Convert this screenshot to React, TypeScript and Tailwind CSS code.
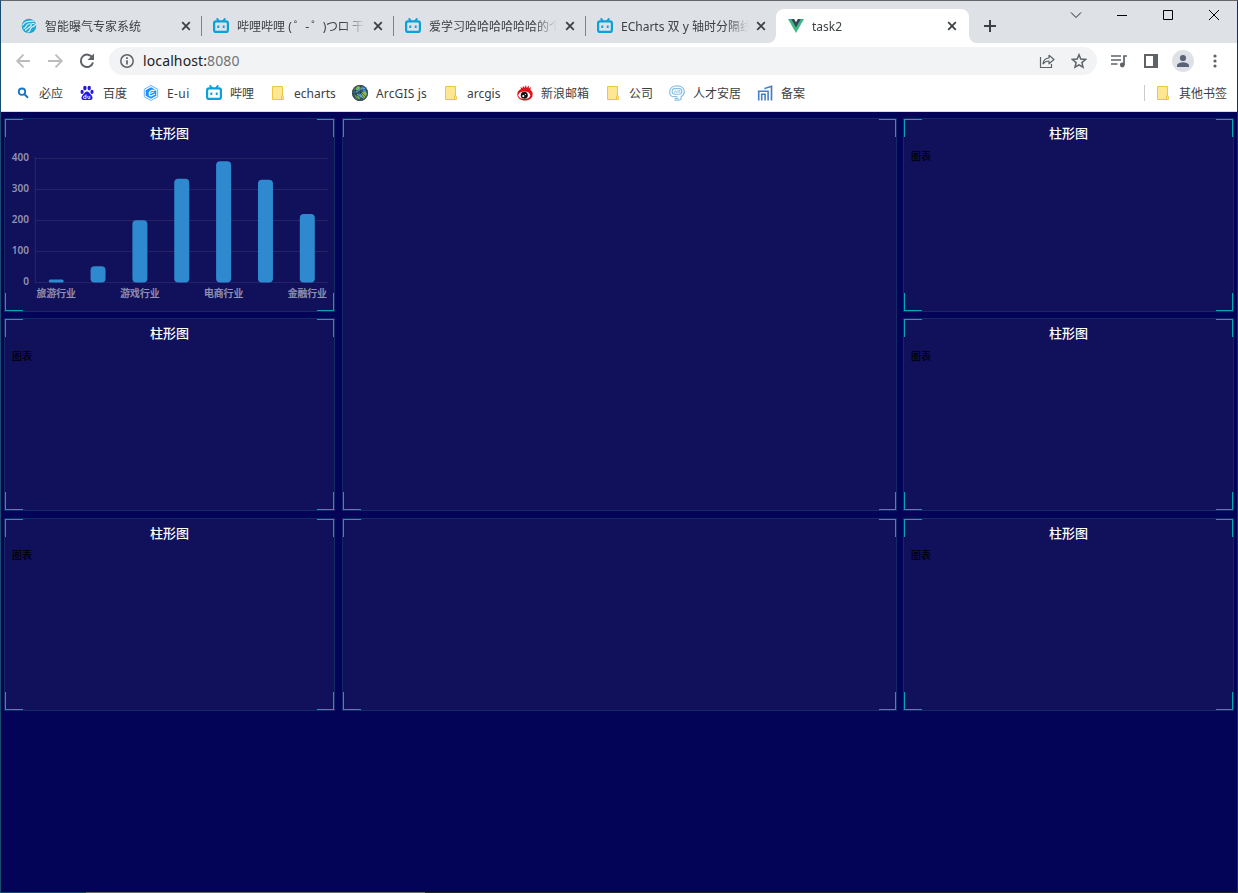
import type { ReactNode } from 'react';

const TvIcon = () => (
  <svg width="16" height="16" viewBox="0 0 16 16" fill="none" stroke="#0ba1d8" strokeWidth="2.200" className="block shrink-0">
    <rect x="1.100" y="3.400" width="13.800" height="10.500" rx="2" />
    <path d="M4.200 .900l1.500 2M11.800 .900l-1.500 2" strokeLinecap="round" strokeWidth="1.800" />
    <path d="M5.300 7.400v2.600M10.700 7.400v2.600" strokeWidth="1.900" />
  </svg>
);

const SwirlIcon = () => (
  <svg width="16" height="16" viewBox="0 0 16 16" className="block shrink-0">
    <circle cx="8" cy="8" r="7.300" fill="#22a7d0" />
    <path d="M1.500 7.500C3.500 3.500 7 3 13.500 3.200M2.500 10.500C6.500 10 4 5.800 8.200 5.800c3.300 0 2 2.200.3 3.200S6.500 11 4 12.500M6.500 14.300c3.500-.5 2-4.300 4.500-5.300 2-.7 3.500-2 3.700-3.200M10.500 5.500h3" fill="none" stroke="#e2f5fb" strokeWidth="1.100" />
  </svg>
);

const VueIcon = () => (
  <svg width="16" height="16" viewBox="0 0 16 16" className="block shrink-0">
    <path d="M0 1h16L8 15z" fill="#41b883" />
    <path d="M3.200 1h9.600L8 9.600z" fill="#35495e" />
    <path d="M6.200 1h3.600L8 4.200z" fill="#fff" />
  </svg>
);

const FolderIcon = () => (
  <svg width="16" height="16" viewBox="0 0 16 16" className="block shrink-0">
    <path d="M2.500 1.500h10v9.500l.900.600v2.900H2.500z" fill="#ffe693" stroke="#edc644" />
    <path d="M11.500 14.500v-3.700h1" fill="none" stroke="#edc644" />
  </svg>
);

const BingIcon = () => (
  <svg width="16" height="16" viewBox="0 0 16 16" fill="none" stroke="#1876c8" className="block shrink-0">
    <circle cx="7" cy="6.700" r="3.200" strokeWidth="1.800" />
    <path d="M9.500 9.300l3.500 3.500" strokeWidth="2" />
  </svg>
);

const PawIcon = () => (
  <svg width="16" height="16" viewBox="0 0 16 16" fill="#2319dc" className="block shrink-0">
    <ellipse cx="5.900" cy="3.100" rx="1.700" ry="2.400" />
    <ellipse cx="10.200" cy="3.100" rx="1.700" ry="2.400" />
    <ellipse cx="3.100" cy="6.900" rx="1.600" ry="2.100" />
    <ellipse cx="13" cy="6.900" rx="1.600" ry="2.100" />
    <path d="M8 6.600c2 0 2.600 1.900 4.200 3.300 2.200 2 1.600 5-1 5.100H4.800c-2.600-.1-3.200-3.100-1-5.100C5.400 8.500 6 6.600 8 6.600z" />
    <path d="M7 9.500v4H5.600a1.200 1.200 0 010-2.400H7M8.900 10.900v1.900q0 .8.900.8h1v-2.700" fill="none" stroke="#fff" strokeWidth=".9" />
  </svg>
);

const HexIcon = () => (
  <svg width="16" height="16" viewBox="0 0 16 16" className="block shrink-0">
    <path d="M8 .5l6.700 3.700v7.600L8 15.500l-6.700-3.700V4.200z" fill="#fff" stroke="#63b4ff" />
    <path d="M8 2.200l5.300 3v5.600l-5.300 3-5.300-3V5.200z" fill="#1e90ff" />
    <path d="M12.500 5.200L8.500 5.400 6.300 7.200v3l1.700.900 4-2M6.300 8.700l4.500-1.700" fill="none" stroke="#fff" strokeWidth="1.100" />
  </svg>
);

const GlobeIcon = () => (
  <svg width="18" height="18" viewBox="0 0 18 18" className="block shrink-0">
    <circle cx="9" cy="9" r="8" fill="#30607c" />
    <path d="M3 5l4-3 4 2-1 3-4 1zM10 9l4-2 2 3-3 5-3-2zM3 10l4 0 2 5-3 0z" fill="#8cbd45" />
    <path d="M4 8l4-4 3 1-5 4zM11 3l3 1 1 4-3-1zM6 11l4-1 0 4z" fill="#5ba7dc" />
    <path d="M2 6c5 0 10 3 13 7M1.500 10c4 0 8 3 10 6M5 2c-1 5 0 10 3 15M10 1c-2 5 0 11 4 14M3 13c3-5 7-8 13-7" fill="none" stroke="#1c2d36" strokeWidth=".6" />
    <circle cx="9" cy="9" r="7.600" fill="none" stroke="#42505a" />
  </svg>
);

const WeiboIcon = () => (
  <svg width="16" height="16" viewBox="0 0 16 16" className="block shrink-0">
    <path d="M.3 10C0 7 1.500 5 4 4L3.500 2l2 1.200L6 .8l1.500 2L9 0l.7 2.900L12 .6l-.2 3L14 2l-.7 3C15.500 6 16 8 15.500 10.500 15 14 11.500 15.500 8 15.500S.8 14 .3 10z" fill="#e0131b" />
    <ellipse cx="7.300" cy="10.300" rx="5.900" ry="3.800" fill="#fff" />
    <circle cx="7.300" cy="10.300" r="3.500" fill="#171111" />
    <circle cx="6.300" cy="11.100" r="1.100" fill="#fff" />
    <circle cx="8.500" cy="9.500" r=".6" fill="#fff" />
  </svg>
);

const HeadIcon = () => (
  <svg width="16" height="16" viewBox="0 0 16 16" fill="none" stroke="#87bfe8" className="block shrink-0">
    <path d="M4 12C1.500 11 .7 9 .7 6.800.7 3 3.500.8 8 .8s7.300 2.200 7.300 6c0 2.300-1.300 4-3.300 5.200v2.300L9.500 15.200H5.500M4 11.500h4.500M5.500 13.300h4" strokeWidth="1.200" />
    <rect x="3.200" y="3.600" width="9.600" height="5.600" rx="2.500" strokeWidth="1.100" />
    <path d="M5.300 7.700l1.200-2 1.200 2M9 5.200v2.500M10.800 5.200v2.500" />
  </svg>
);

const BuildingIcon = () => (
  <svg width="16" height="16" viewBox="0 0 16 16" fill="none" stroke="#4b7dbd" className="block shrink-0">
    <path d="M8.300 4.200V3.300L14.500 1.300V15.500" strokeWidth="1.700" />
    <path d="M.8 6.300h10.300v9.200M1.700 6.300v9.200M4.700 15.500V9.300h3.400v6.200" strokeWidth="1.600" />
  </svg>
);

const Cross = () => (
  <svg width="10" height="10" viewBox="0 0 10 10" className="block shrink-0" stroke="#3c4043" strokeWidth="1.800">
    <path d="M1.200 1.200l7.600 7.600M8.800 1.200l-7.600 7.600" />
  </svg>
);

type TabProps = { icon: ReactNode; title: ReactNode; crossGap?: string };

const Tab = ({ icon, title, crossGap = 'ml-2' }: TabProps) => (
  <div className="flex h-[34px] w-48 shrink-0 items-center pl-3">
    {icon}
    <div className="ml-2 w-[128px] overflow-hidden pt-0.5 text-xs whitespace-nowrap [mask-image:linear-gradient(to_right,#000_106px,transparent_128px)]">{title}</div>
    <div className={crossGap}><Cross /></div>
  </div>
);

const Separator = () => <div className="-mr-px h-5 w-px shrink-0 self-center bg-[#808387]" />;

const TabStrip = () => (
  <div className="flex h-[42px] shrink-0 bg-[#dee1e6] pt-2 pl-2">
    <Tab icon={<SwirlIcon />} title="智能曝气专家系统" />
    <Separator />
    <Tab icon={<TvIcon />} title={<>哔哩哔哩 <span className="tracking-[-0.5px]">( ゜- ゜)つロ</span> 干杯</>} />
    <Separator />
    <Tab icon={<TvIcon />} title="爱学习哈哈哈哈哈哈的个人" />
    <Separator />
    <Tab icon={<TvIcon />} title="ECharts 双 y 轴时分隔线对" crossGap="ml-[7px]" />
    <div className="relative -ml-px w-[193px] rounded-t-lg bg-white">
      <Tab icon={<VueIcon />} title="task2" crossGap="ml-[7px]" />
      <svg width="8" height="8" className="absolute bottom-0 -left-2"><path d="M8 0v8H0a8 8 0 008-8" fill="#fff" /></svg>
      <svg width="8" height="8" className="absolute -right-2 bottom-0"><path d="M0 0v8h8a8 8 0 01-8-8" fill="#fff" /></svg>
    </div>
    <svg width="12" height="12" viewBox="0 0 12 12" className="mt-[11px] ml-[15px] shrink-0" stroke="#3c4043" strokeWidth="2"><path d="M6 0v12M0 6h12" /></svg>
    <div className="mr-[17px] ml-auto flex h-3 gap-[34px]">
      <svg width="12" height="12" viewBox="0 0 12 12" fill="none" stroke="#202124"><path d="M1 3.500l5 5 5-5" /></svg>
      <svg width="12" height="12" viewBox="0 0 12 12" stroke="#000"><path d="M1 6.500h10" /></svg>
      <svg width="12" height="12" viewBox="0 0 12 12" fill="none" stroke="#000"><path d="M1.500 1.500h9v9h-9z" /></svg>
      <svg width="12" height="12" viewBox="0 0 12 12" stroke="#000"><path d="M1 1l10 10M11 1L1 11" /></svg>
    </div>
  </div>
);

const Toolbar = () => (
  <div className="flex h-9 shrink-0 items-center bg-white pl-3.5">
    <svg width="18" height="18" viewBox="0 0 18 18" fill="none" stroke="#babcbe" strokeWidth="1.800"><path d="M15 9H2.500M8.500 2.700L2.200 9l6.300 6.300" /></svg>
    <svg width="18" height="18" viewBox="0 0 18 18" fill="none" stroke="#babcbe" strokeWidth="1.800" className="ml-3.5"><path d="M1 9h13M8.500 2.700L14.800 9l-6.300 6.300" /></svg>
    <svg width="16" height="16" viewBox="0 0 16 16" fill="none" stroke="#5f6368" strokeWidth="2" className="ml-3.5"><path d="M13.400 4.700A6.200 6.200 0 1014 9.500" /><path d="M15 .5v6.500H8.500z" fill="#5f6368" stroke="none" /></svg>
    <div className="ml-3.5 flex h-7 w-[988px] items-center rounded-full bg-[#f1f3f4] pr-[10px] pl-[11px]">
      <svg width="14" height="14" viewBox="0 0 14 14" fill="none" stroke="#5f6368" strokeWidth="1.500"><circle cx="7" cy="7" r="6.200" /><path d="M7 6.200v4.300M7 3.300v1.600" strokeWidth="1.700" /></svg>
      <span className="ml-[9px] text-[14px] leading-5 tracking-[0.12px] text-[#202124]">localhost:<span className="text-[#6f7377]">8080</span></span>
      <svg width="16" height="16" viewBox="0 0 16 16" fill="none" stroke="#5f6368" strokeWidth="1.200" className="ml-auto"><path d="M1.500 4v10.500h11V11" /><path d="M4 10.800c.5-3.800 2.500-5.700 6-5.800V2.300l5 4.200-5 4.300V8C7.300 8 5.500 8.900 4 10.800z" strokeLinejoin="round" /></svg>
      <svg width="16" height="16" viewBox="0 0 16 16" fill="none" stroke="#5f6368" strokeWidth="1.500" className="ml-4"><path d="M8 1.800l1.800 4.300 4.700.4-3.600 3.100 1.100 4.600L8 11.800l-4 2.400 1.100-4.600-3.600-3.100 4.700-.4z" /></svg>
    </div>
    <svg width="16" height="14" viewBox="0 0 16 14" fill="none" stroke="#5f6368" strokeWidth="1.700" className="ml-[14px]"><path d="M0 2h10M0 6h10M0 10h6.500M13 11V2h3" /><circle cx="11.300" cy="11" r="2.400" fill="#5f6368" stroke="none" /></svg>
    <svg width="14" height="14" viewBox="0 0 14 14" className="ml-[17px]"><path d="M0 0h14v14H0zM2 2v10h7V2z" fill="#5f6368" fillRule="evenodd" /></svg>
    <svg width="22" height="22" viewBox="0 0 22 22" className="ml-3.5"><circle cx="11" cy="11" r="11" fill="#dee1e6" /><circle cx="11" cy="8" r="3.100" fill="#5a6378" /><path d="M5 17v-1.500c0-2.500 4-3.300 6-3.300s6 .8 6 3.300V17z" fill="#5a6378" /></svg>
    <svg width="4" height="14" viewBox="0 0 4 14" fill="#5f6368" className="ml-[19px]"><circle cx="2" cy="2" r="1.600" /><circle cx="2" cy="7" r="1.600" /><circle cx="2" cy="12" r="1.600" /></svg>
  </div>
);

const bookmarks: { icon: ReactNode; label: string; width: string }[] = [
  { icon: <BingIcon />, label: '必应', width: 'w-16' },
  { icon: <PawIcon />, label: '百度', width: 'w-16' },
  { icon: <HexIcon />, label: 'E-ui', width: 'w-[63px] tracking-[0.4px]' },
  { icon: <TvIcon />, label: '哔哩', width: 'w-16' },
  { icon: <FolderIcon />, label: 'echarts', width: 'w-[82px]' },
  { icon: <div className="-mx-px"><GlobeIcon /></div>, label: 'ArcGIS js', width: 'w-[91px] tracking-[0.15px]' },
  { icon: <FolderIcon />, label: 'arcgis', width: 'w-[74px]' },
  { icon: <WeiboIcon />, label: '新浪邮箱', width: 'w-[88px]' },
  { icon: <FolderIcon />, label: '公司', width: 'w-16' },
  { icon: <HeadIcon />, label: '人才安居', width: 'w-[88px]' },
  { icon: <BuildingIcon />, label: '备案', width: 'w-16' },
];

const BookmarkBar = () => (
  <div className="flex h-[33px] shrink-0 items-center border-b border-[#dadce0] bg-white pb-[5px] pl-3.5 text-xs text-[#3c4043]">
    {bookmarks.map((b) => (
      <div key={b.label} className={`flex shrink-0 items-center gap-2 whitespace-nowrap ${b.width}`}>
        {b.icon}
        <span className="pt-0.5">{b.label}</span>
      </div>
    ))}
    <div className="mr-[10px] ml-auto flex items-center gap-2">
      <div className="mr-[2px] h-4 w-px bg-[#c8cacd]" />
      <FolderIcon />
      <span className="pt-0.5">其他书签</span>
    </div>
  </div>
);

const data = [
  { name: '旅游行业', value: 10 },
  { name: '', value: 52 },
  { name: '游戏行业', value: 200 },
  { name: '', value: 334 },
  { name: '电商行业', value: 390 },
  { name: '', value: 330 },
  { name: '金融行业', value: 220 },
];

const BarChart = () => (
  <svg width="329" height="165" viewBox="5 146 329 165" className="absolute top-[27px] left-0 text-[10px] font-medium" fill="#9292b2">
    {[0, 100, 200, 300, 400].map((v) => (
      <g key={v}>
        <path d={`M35 ${Math.round(282 - v * 0.311) + 0.5}H328`} stroke="#242467" />
        <text x="29" y={285.200 - v * 0.311} textAnchor="end" className="font-semibold">{v}</text>
      </g>
    ))}
    <path d="M35.300 157v126" stroke="#29296a" />
    {data.map((d, i) => {
      const cx = 56.200 + i * 41.850;
      const h = d.value * 0.311;
      return (
        <g key={i}>
          <rect x={cx - 7.500} y={282.500 - h} width="15" height={h} rx={Math.min(4, h / 2)} fill="#2f89cf" />
          <text x={cx} y="296.700" textAnchor="middle" fontSize="9.800" stroke="#9292b2" strokeWidth=".25">{d.name}</text>
        </g>
      );
    })}
  </svg>
);

type PanelProps = { title?: string; className: string; children?: ReactNode };

const Panel = ({ title, className, children }: PanelProps) => (
  <section className={`relative border border-[#132a62] bg-[#10105b] ${className}`}>
    <i className="absolute top-0 left-0 size-[18px] border-t border-l border-[#02a6b5]" />
    <i className="absolute top-0 right-0 h-[18px] w-[17px] border-t border-r border-[#02a6b5]" />
    <i className="absolute bottom-0 left-0 size-[18px] border-b border-l border-[#02a6b5]" />
    <i className="absolute right-0 bottom-0 h-[18px] w-[17px] border-r border-b border-[#02a6b5]" />
    {title && <h2 className="pt-1 text-center text-[13px] leading-5 font-medium text-white">{title}</h2>}
    {children}
  </section>
);

const Placeholder = ({ raised = false }: { raised?: boolean }) => (
  <p className={`pl-[7px] text-[10px] leading-4 font-medium text-black ${raised ? 'pt-1' : 'pt-[5px]'}`}>图表</p>
);

const Dashboard = () => (
  <main className="flex grow items-start gap-[7px] bg-[#030457] pt-1.5 pl-[3px]">
    <div className="flex w-[331px] flex-col">
      <Panel title="柱形图" className="mb-1.5 h-[194px]"><BarChart /></Panel>
      <Panel title="柱形图" className="mb-[7px] h-[193px]"><Placeholder /></Panel>
      <Panel title="柱形图" className="h-[193px]"><Placeholder raised /></Panel>
    </div>
    <div className="flex w-[555px] flex-col">
      <Panel className="mb-[7px] h-[393px]" />
      <Panel className="h-[193px]" />
    </div>
    <div className="-ml-px flex w-[331px] flex-col">
      <Panel title="柱形图" className="mb-1.5 h-[194px]"><Placeholder /></Panel>
      <Panel title="柱形图" className="mb-[7px] h-[193px]"><Placeholder /></Panel>
      <Panel title="柱形图" className="h-[193px]"><Placeholder raised /></Panel>
    </div>
  </main>
);

const BottomEdge = () => (
  <div className="-mx-px flex h-px shrink-0">
    <div className="w-[86px] bg-[#0f4a66]" />
    <div className="w-[339px] bg-[#6b6b6e]" />
    <div className="grow bg-[#24242c]" />
  </div>
);

export default function App() {
  return (
    <div className="flex h-[893px] w-[1238px] flex-col overflow-hidden border-t border-r border-l border-t-[#65676b] border-r-[#1c2d50] border-l-[#174c70] font-['Noto_Sans','Noto_Sans_CJK_SC',sans-serif] text-[#3c4043]">
      <TabStrip />
      <Toolbar />
      <BookmarkBar />
      <Dashboard />
      <BottomEdge />
    </div>
  );
}
